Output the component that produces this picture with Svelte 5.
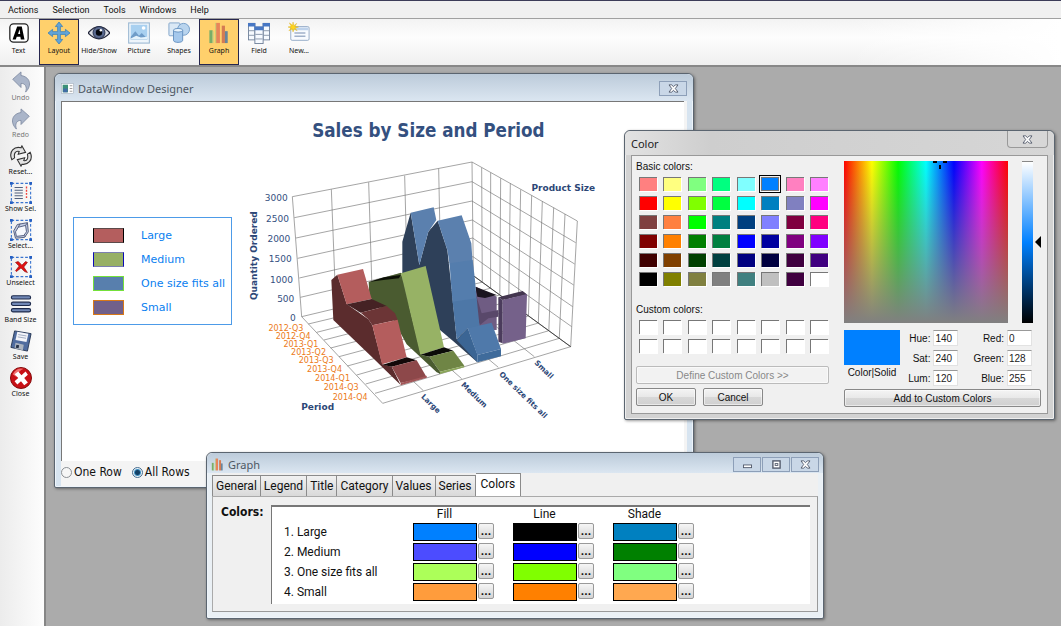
<script>
  const menus = ['Actions', 'Selection', 'Tools', 'Windows', 'Help'];
  const tools = [
    { id: 'text', label: 'Text' },
    { id: 'layout', label: 'Layout', on: true },
    { id: 'eye', label: 'Hide/Show' },
    { id: 'picture', label: 'Picture' },
    { id: 'shapes', label: 'Shapes' },
    { id: 'graph', label: 'Graph', on: true },
    { id: 'field', label: 'Field' },
    { id: 'new', label: 'New...' }
  ];
  const side = [
    { id: 'undo', label: 'Undo', off: true },
    { id: 'redo', label: 'Redo', off: true },
    { id: 'reset', label: 'Reset...' },
    { id: 'showsel', label: 'Show Sel.' },
    { id: 'select', label: 'Select...' },
    { id: 'unselect', label: 'Unselect' },
    { id: 'band', label: 'Band Size' },
    { id: 'save', label: 'Save' },
    { id: 'close', label: 'Close' }
  ];
  const legend = [
    { name: 'Large', fill: '#b45e5e', side: '#000000', edge: '#5c4a4a' },
    { name: 'Medium', fill: '#97b065', side: '#0a0ab8', edge: '#7c80b0' },
    { name: 'One size fits all', fill: '#587fad', side: '#74e03a', edge: '#74e03a' },
    { name: 'Small', fill: '#71608a', side: '#d87818', edge: '#d87818' }
  ];
  const basic = [
    '#ff8080', '#ffff80', '#80ff80', '#00ff80', '#80ffff', '#0080ff', '#ff80c0', '#ff80ff',
    '#ff0000', '#ffff00', '#80ff00', '#00ff40', '#00ffff', '#0080c0', '#8080c0', '#ff00ff',
    '#804040', '#ff8040', '#00ff00', '#008080', '#004080', '#8080ff', '#800040', '#ff0080',
    '#800000', '#ff8000', '#008000', '#008040', '#0000ff', '#0000a0', '#800080', '#8000ff',
    '#400000', '#804000', '#004000', '#004040', '#000080', '#000040', '#400040', '#400080',
    '#000000', '#808000', '#808040', '#808080', '#408080', '#c0c0c0', '#400040', '#ffffff'
  ];
  const custom = Array(16).fill('#ffffff');
  const tabs = ['General', 'Legend', 'Title', 'Category', 'Values', 'Series', 'Colors'];
  const series = [
    { name: '1. Large', colors: ['#0080ff', '#000000', '#0080c0'] },
    { name: '2. Medium', colors: ['#4c4cff', '#0000ff', '#008000'] },
    { name: '3. One size fits all', colors: ['#acff59', '#80ff00', '#80ff80'] },
    { name: '4. Small', colors: ['#ff9c3c', '#ff8000', '#ffa850'] }
  ];
  const kinds = ['Fill', 'Line', 'Shade'];
  const values = [
    { label: 'Hue:', value: 140 }, { label: 'Red:', value: 0 },
    { label: 'Sat:', value: 240 }, { label: 'Green:', value: 128 },
    { label: 'Lum:', value: 120 }, { label: 'Blue:', value: 255 }
  ];

  // Chart frame: seven levels across two walls, and a floor of ten periods.
  const levels = [
    [157, 290, 696, 186, 1012, 363], [163, 353, 696, 245, 1007, 428],
    [168, 414, 696, 303, 1004, 492], [173, 475, 697, 360, 1001, 555],
    [178, 534, 698, 414, 998, 620], [181, 592, 699, 470, 995, 680],
    [185, 650, 700, 527, 992, 740]
  ];
  const leftPosts = [[157, 290, 185, 650], [274, 268, 288, 627], [386, 247, 397, 601], [494, 227, 503, 575], [596, 206, 603, 550], [696, 186, 700, 527]];
  const rightTops = [[725, 203], [752, 218], [782, 235], [811, 250], [842, 269], [875, 286], [907, 304], [941, 323], [975, 342], [1012, 363]];
  const rightPosts = rightTops.map(([x, y]) => {
    const t = (x - 696) / 316;
    return [x, y, 700 + 292 * t, 527 + 213 * t];
  });
  const ticks = [[205, 672], [230, 697], [252, 720], [272, 744], [297, 770], [322, 798], [350, 825], [377, 852], [405, 880], [428, 910]];
  const fronts = [[550, 872], [665, 836], [775, 802], [883, 770]];
  const amounts = [['3000', 143, 302], ['2500', 147, 365], ['2000', 151, 426], ['1500', 155, 487], ['1000', 159, 548], ['500', 163, 605], ['0', 167, 663]];
  const periods = [['2012-Q3', 190, 693], ['2012-Q4', 212, 717], ['2013-Q1', 235, 741], ['2013-Q2', 258, 765], ['2013-Q3', 281, 790], ['2013-Q4', 306, 816], ['2014-Q1', 330, 843], ['2014-Q3', 356, 870], ['2014-Q4', 383, 899]];
  const sizes = [['Large', 542, 892, 44], ['Medium', 662, 856, 44], ['One size fits all', 776, 824, 44], ['Small', 882, 790, 44]];
  const faces = [
    ['#6f5c83', '708,560 770,590 770,690 708,690'],
    ['#59486a', '705,575 725,640 775,630 775,650 745,655 720,675 705,640'],
    ['#1b1520', '706,560 770,585 735,594 712,590'],
    ['#4b3c5c', '775,592 788,600 788,730 775,725'],
    ['#43364f', '775,592 848,573 862,584 788,600'],
    ['#75618a', '788,600 861,582 857,715 788,731'],
    ['#2e4059', '487,425 512,338 538,495 565,395 593,362 622,450 632,540 650,718 683,685 712,787 640,724 600,690 487,600'],
    ['#5b80ae', '512,338 581,322 589,360 565,395 538,495'],
    ['#5b80ae', '593,362 665,346 694,430 698,490 630,500 622,450'],
    ['#547dad', '629,490 698,480 705,540 710,600 638,610 632,540'],
    ['#4d77a7', '638,605 710,595 718,672 720,690 683,685 650,718'],
    ['#3b6594', '683,685 712,763 712,787 650,720'],
    ['#4f79aa', '683,685 755,668 783,747 712,765'],
    ['#3f6b9b', '712,765 783,747 783,769 712,787'],
    ['#4a5b30', '386,546 483,518 543,763 602,822 590,817 500,733 460,660 388,590'],
    ['#0c1006', '386,546 432,532 482,525 477,535 430,540'],
    ['#97b265', '483,520 557,498 612,742 541,764'],
    ['#0b0c08', '541,764 612,742 640,752 568,770'],
    ['#6f8545', '568,770 640,752 673,797 600,815'],
    ['#8ba65a', '600,815 673,797 673,802 600,822'],
    ['#4a5b30', '541,764 568,770 600,815 600,822'],
    ['#5b2c2d', '274,540 292,524 320,612 385,658 397,676 427,793 455,800 482,855 438,812 395,770 280,660'],
    ['#b45d5d', '292,524 369,507 395,597 320,613'],
    ['#452224', '320,613 395,597 440,618 362,638'],
    ['#6c3536', '362,638 440,618 465,640 473,659 397,676 385,658'],
    ['#b45d5d', '397,676 473,659 500,772 426,793'],
    ['#130808', '428,794 500,772 530,781 455,800'],
    ['#8d484a', '455,800 530,781 560,832 482,849'],
    ['#a35658', '482,849 560,827 560,833 482,856']
  ];
</script>

{#snippet icon(id)}
  <svg class="icon" viewBox="0 0 24 24" aria-hidden="true">
    {#if id === 'text'}
      <rect x="2" y="2" width="20" height="20" rx="4" fill="#fff" stroke="#222" stroke-width="1.4" />
      <path d="M5 19 10 5h5l3 14h-4l-.5-3h-4L8.500 19z" fill="#000" /><path d="m11 13 1.600-5 .7 5z" fill="#fff" />
    {:else if id === 'layout'}
      <path d="m12 0 4 5h-2.500v5.500H19V8l5 4-5 4v-2.500h-5.500V19H16l-4 5-4-5h2.500v-5.500H5V16l-5-4 5-4v2.500h5.500V5H8z" fill="#62a4d8" stroke="#347bb5" stroke-width=".8" />
    {:else if id === 'eye'}
      <path d="M0 12Q12-2 24 12 12 25 0 12z" fill="#d9dce3" stroke="#23263a" stroke-width="1.300" />
      <circle cx="12" cy="11.500" r="6.500" fill="#59698f" stroke="#1f2945" /><circle cx="12" cy="11.500" r="3.500" fill="#050810" /><circle cx="14" cy="9" r="1.300" fill="#fff" />
    {:else if id === 'picture'}
      <rect x=".7" y="1" width="22.600" height="22" fill="#eef5fb" stroke="#9db9d4" stroke-width="1.200" /><rect x="3" y="3" width="18" height="16" fill="#a8d0f0" />
      <path d="m3 16 5-6 4 5 3-3 6 6v1H3z" fill="#6f9cc8" /><path d="m3 18 6-3 5 2 7-1v3H3z" fill="#e5f3fc" /><circle cx="17" cy="6.500" r="2" fill="#fff" />
    {:else if id === 'shapes'}
      <rect x="1" y="1" width="12" height="14" rx="1" fill="#dae8f5" stroke="#7fa3c8" /><circle cx="17" cy="8" r="6.500" fill="#b9d4ee" stroke="#6f99c6" />
      <path d="M6 9v11c0 3 10 3 10 0V9z" fill="#a5c8ec" stroke="#648fbe" /><ellipse cx="11" cy="9" rx="5" ry="2" fill="#e8f3fc" stroke="#648fbe" />
    {:else if id === 'graph'}
      <rect x="1.500" y="9" width="3.500" height="14" fill="#79ad68" /><rect x="5" y="10" width="1" height="13" fill="#b5cf8a" /><rect x="8" y="1" width="1.500" height="22" fill="#b9c878" /><rect x="9" y="1" width="4" height="22" fill="#e8835a" /><rect x="15" y="4" width="3.500" height="19" fill="#d47b53" /><rect x="18.500" y="10" width="3" height="13" fill="#67859c" />
    {:else if id === 'field'}
      <g fill="#f6faff" stroke="#71829b"><rect x="0.500" y="1.500" width="7" height="18" /><rect x="16.500" y="1.500" width="7" height="18" /><rect x="7.500" y="5.500" width="9" height="18" /></g>
      <path d="M0 1h8v4H0zm16 0h8v4h-8zM7 5h10v4H7z" fill="#4777c4" /><path d="M1 9.500h6m-6 5h6M8 13.500h8m-8 5h8m1-9h6m-6 5h6" stroke="#8494a9" />
    {:else if id === 'new'}
      <rect x="3" y="5" width="20" height="15" rx="1.500" fill="#f8fbff" stroke="#92a8c5" /><path d="M4 6h18v3H4z" fill="#bed2eb" /><path d="M7 12h12M7 15.500h12" stroke="#a0b1ca" stroke-width="1.500" />
      <path d="m5.500 0 .8 4 3.200-2.500-2 3.500 4 .5-4 1 2.500 3-3.500-2-1 3.500-.8-3.500L1 9.500l2.500-3L0 5.500l3.500-.8L1.500 1 5 3.500z" fill="#ffd51c" stroke="#d9a500" stroke-width=".4" />
    {:else if id === 'undo' || id === 'redo'}
      <g transform={id === 'redo' ? 'translate(24 0) scale(-1 1)' : ''}>
        <path d="M3 9 12 1v4c9 1 13 10 5 18 2-6-.5-9.500-5-9.500V18z" fill="#aab5c9" stroke="#7d89a0" stroke-width=".9" />
      </g>
    {:else if id === 'reset'}
      <g fill="#e3e3e3" stroke="#333" stroke-width="1.200">
        <path d="M2 16C-2 7 5 1 12 3l1-2 4 7-8 2 1-3C6 6 4 9 5 14z" /><path d="M22 8c4 9-3 14-9 13l-1 2-4-7 8-2-1 3c4 1 5-3 4-7z" />
      </g>
    {:else if id === 'showsel' || id === 'select' || id === 'unselect'}
      <rect x="1.500" y="1.500" width="21" height="21" fill="none" stroke="#3974cf" stroke-dasharray="3 2" stroke-width="1.200" /><path d="M0 0h3v3H0zm21 0h3v3h-3zM0 21h3v3H0zm21 0h3v3h-3z" fill="#255fc2" />
      {#if id === 'showsel'}
        <path d="M5 6h9M5 9h9M5 12h9M5 15h9M5 18h9" stroke="#52617e" stroke-width="1.200" /><path d="M18 5v14" stroke="#f0433a" stroke-width="1.500" stroke-dasharray="2 1.500" />
      {:else if id === 'select'}
        <g fill="#c6cfe4" stroke="#4c5779"><path d="M8 6 19 4l1 10-4 6-10 1-2-8z" /><path d="m9 9 8-2 1 7-3 4-8 1-1-5z" fill="#f6f8fd" /><path d="m9 9 2-4M17 7l2-3M15 18l2 1" fill="none" /></g>
      {:else}
        <path d="m6 7 3-1 4 4 4-4 2 1-4 5 4 6-3-1-4-4-5 4-1-1 4-5z" fill="#e31010" stroke="#8f0808" stroke-width=".7" />
      {/if}
    {:else if id === 'band'}
      <g fill="#7087b5" stroke="#1e2b4c" stroke-width="1.200"><rect x="1.500" y="3" width="21" height="3.600" rx="1.800" /><rect x="1.500" y="10" width="21" height="3.600" rx="1.800" /><rect x="1.500" y="17" width="21" height="3.600" rx="1.800" /></g>
    {:else if id === 'save'}
      <path d="m5 1 18 3-4 19-18-4z" fill="#506c9f" stroke="#243452" /><path d="m8 2 12 2-2 9-12-2z" fill="#f4f5fa" /><path d="m6 14 9 2-1 6-9-2z" fill="#acb4c0" /><path d="m7 16 3 .5-.7 3.500-3-.6z" fill="#263248" /><path d="m9 5 9 1.500M8.500 7.500l9 1.500" stroke="#9aa6bd" />
    {:else if id === 'close'}
      <circle cx="12" cy="12" r="11.500" fill="#c81016" stroke="#7e0606" /><path d="M3 8Q7 0 15 2q-6 2-8 9z" fill="#ef6d6d" />
      <path d="m5 8 4-3 3.500 4L17 5l2.500 3.500-4 3.500 4 5-4 3-3.500-4.500L8 19l-3-3.500 4-3.500z" fill="#fff" />
    {:else if id === 'window'}
      <rect x="1" y="3" width="22" height="18" fill="#fff" stroke="#a2adba" /><path d="M3 5h10v14H3z" fill="#3b9078" /><path d="M4 12h8v7H4z" fill="#426ca6" /><path d="M16 7h5m-5 5h5m-5 5h5" stroke="#a0a0a0" stroke-width="2" />
    {/if}
  </svg>
{/snippet}

{#snippet cross()}
  <svg class="cross" viewBox="0 0 12 10" aria-hidden="true"><path d="M1 1h3l2 2 2-2h3L8 5l3 4H8L6 7 4 9H1l3-4z" fill="#fff" stroke="#50586a" /></svg>
{/snippet}

<div class="app">
  <nav class="menu" aria-label="Main">
    {#each menus as m}<button>{m}</button>{/each}
  </nav>
  <div class="toolbar" role="toolbar" aria-label="Tools">
    {#each tools as t}
      <button class="tool" class:on={t.on} aria-pressed={!!t.on}>{@render icon(t.id)}<span>{t.label}</span></button>
    {/each}
  </div>
  <div class="main">
    <aside class="sidebar">
      {#each side as s}
        <button class="tool" class:off={s.off}>{@render icon(s.id)}<span>{s.label}</span></button>
      {/each}
    </aside>
    <main class="desktop">
      <section class="win designer" aria-label="DataWindow Designer">
        <header class="titlebar">{@render icon('window')}<h2>DataWindow Designer</h2><button class="ctl" aria-label="Close">{@render cross()}</button></header>
        <div class="canvas">
          <ul class="legend">
            {#each legend as l}
              <li><i style="background:{l.fill};border-color:{l.edge} {l.side}"></i>{l.name}</li>
            {/each}
          </ul>
          <svg class="chart" viewBox="0 6 1080 1005" role="img" aria-label="Sales by Size and Period">
            <g class="grid">
              {#each levels as [a, b, c, d, e, f]}<polyline points="{a},{b} {c},{d} {e},{f}" />{/each}
              {#each [...leftPosts, ...rightPosts] as [a, b, c, d]}<line x1={a} y1={b} x2={c} y2={d} />{/each}
              {#each ticks as [x, y], i}<line x1={x} y1={y} x2={rightPosts[i][2]} y2={rightPosts[i][3]} />{/each}
              {#each fronts as [x, y], i}<line x1={x} y1={y} x2={leftPosts[i + 1][2]} y2={leftPosts[i + 1][3]} />{/each}
              <line x1="185" y1="650" x2="428" y2="910" />
            </g>
            <line x1="700" y1="527" x2="992" y2="740" stroke="#444" stroke-width="3" />
            {#each faces as [fill, points]}<polygon {fill} {points} />{/each}
            <text class="title" x="565" y="111" text-anchor="middle">Sales by Size and Period</text>
            <text class="axis" x="970" y="273" text-anchor="middle">Product Size</text>
            <text class="axis" x="233" y="929" text-anchor="middle">Period</text>
            <text class="axis" transform="translate(52 467) rotate(-90)" text-anchor="middle">Quantity Ordered</text>
            {#each amounts as [t, x, y]}<text class="amount" {x} {y} text-anchor="end">{t}</text>{/each}
            {#each periods as [t, x, y]}<text class="period" {x} {y} text-anchor="end">{t}</text>{/each}
            {#each sizes as [t, x, y, r]}<text class="size" transform="translate({x} {y}) rotate({r})">{t}</text>{/each}
          </svg>
        </div>
        <div class="rows">
          <label><input type="radio" name="rows" />One Row</label>
          <label><input type="radio" name="rows" checked />All Rows</label>
        </div>
      </section>

      <section class="win graph" aria-label="Graph">
        <header class="titlebar">
          {@render icon('graph')}<h2>Graph</h2>
          <button class="ctl" aria-label="Minimize"><svg class="cross" viewBox="0 0 12 10"><rect x="1.500" y="5.500" width="9" height="3" fill="#fff" stroke="#50586a" /></svg></button>
          <button class="ctl" aria-label="Maximize"><svg class="cross" viewBox="0 0 12 10"><rect x="2" y="1" width="8" height="8" fill="#fff" stroke="#50586a" stroke-width="1.500" /><rect x="4.500" y="4" width="3" height="2" fill="none" stroke="#50586a" /></svg></button>
          <button class="ctl" aria-label="Close">{@render cross()}</button>
        </header>
        <div class="sheet">
          <div class="tabs" role="tablist">
            {#each tabs as t}<button role="tab" aria-selected={t === 'Colors'} class:active={t === 'Colors'}>{t}</button>{/each}
          </div>
          <div class="panel">
            <h3>Colors:</h3>
            <div class="list">
              <table>
                <thead><tr><td></td>{#each kinds as k}<th scope="col">{k}</th>{/each}</tr></thead>
                <tbody>
                  {#each series as s}
                    <tr>
                      <th scope="row">{s.name}</th>
                      {#each s.colors as c, i}
                        <td><div class="pick"><span class="sample" style="background:{c}"></span><button aria-label="{kinds[i]} for {s.name}">...</button></div></td>
                      {/each}
                    </tr>
                  {/each}
                </tbody>
              </table>
            </div>
          </div>
        </div>
      </section>

      <section class="win color" aria-label="Color">
        <header class="titlebar"><h2>Color</h2><button class="ctl" aria-label="Close">{@render cross()}</button></header>
        <div class="dialog">
          <div class="left">
            <h3>Basic colors:</h3>
            <div class="swatches">
              {#each basic as c, i}<button class:chosen={i === 5} aria-label={c} style="background:{c}"></button>{/each}
            </div>
            <h3 class="second">Custom colors:</h3>
            <div class="swatches">
              {#each custom as c, i}<button aria-label="Custom {i + 1}" style="background:{c}"></button>{/each}
            </div>
            <button class="push define" disabled>Define Custom Colors &gt;&gt;</button>
            <div class="actions"><button class="push">OK</button><button class="push">Cancel</button></div>
          </div>
          <div class="right">
            <div class="mix">
              <div class="field">
                <svg class="aim" viewBox="0 0 14 8" aria-hidden="true"><path d="M0 1h4M10 1h4M7 4v4" stroke="#000" stroke-width="2" /></svg>
              </div>
              <div class="lum"><svg class="arrow" viewBox="0 0 6 12" aria-hidden="true"><path d="M6 0v12L0 6z" /></svg></div>
            </div>
            <div class="details">
              <div class="preview"><span class="now"></span><span>Color|Solid</span></div>
              <div class="numbers">
                {#each values as v}<label for={v.label}>{v.label}</label><input id={v.label} value={v.value} />{/each}
              </div>
            </div>
            <button class="push">Add to Custom Colors</button>
          </div>
        </div>
      </section>
    </main>
  </div>
</div>

<style>
  :global(body) { margin: 0; }
  * { box-sizing: border-box; }
  button { font: inherit; color: inherit; padding: 0; margin: 0; border: 0; background: none; }
  h2, h3 { margin: 0; font-weight: 400; }
  .app { min-height: 100vh; display: flex; flex-direction: column; font-family: Roboto, sans-serif; color: #111; background: #ababab; }
  .menu { display: flex; gap: 14px; height: 18px; padding: 0 8px; align-items: center; background: #f0f0f0; border-top: 1px solid #3c3c58; font: 9px Roboto, sans-serif; }
  .toolbar { display: flex; height: 49px; border-top: 1px solid #a0a0a0; border-bottom: 2px solid #888; background: linear-gradient(90deg, #fff0 80%, #fff 100%), linear-gradient(#f3f3f3, #fdfdfd 40%, #efefef); }
  .tool { display: flex; flex-direction: column; align-items: center; font: 7px "Noto Sans", sans-serif; line-height: 10px; white-space: nowrap; }
  .toolbar .tool { width: 40px; padding-top: 2px; gap: 2px; border: 1px solid transparent; border-bottom-width: 0; }
  .toolbar .tool:first-child { width: 39px; padding-right: 2px; }
  .toolbar .on { background: #ffd06c; border: 1px solid #26264e; }
  .icon { width: 22px; height: 22px; display: block; flex: none; }
  .main { flex: 1; display: flex; }
  .sidebar { width: 46px; padding: 4px 3px 0 0; display: flex; flex-direction: column; gap: 5px; background: linear-gradient(90deg, #ececec, #fdfdfd); border-right: 2px solid #868686; }
  .off span { color: #777; }
  .desktop { flex: 1; position: relative; overflow: hidden; min-height: 558px; background: #ababab; }

  .win { position: absolute; border: 1px solid #5b6570; border-radius: 6px 6px 2px 2px; padding: 0 6px 6px; background: #d7e4f0; box-shadow: inset 0 0 0 1px #eef4fa, 1px 1px 3px #0006; }
  .titlebar { display: flex; align-items: center; height: 27px; gap: 4px; margin: 0 -6px; padding: 3px 6px 0; border-radius: 6px 6px 0 0; background: linear-gradient(#bccbda, #dbe6f1); }
  .titlebar h2 { flex: 1; font: 11px "Noto Sans", sans-serif; color: #4d5763; }
  .titlebar .icon { width: 13px; height: 13px; }
  .ctl { width: 28px; height: 15px; display: grid; place-items: center; border: 1px solid #8d9fb8; background: #c9d7e7; }
  .ctl + .ctl { margin-left: -3px; }
  .cross { width: 11px; height: 9px; }

  .designer { left: 8px; top: 6px; width: 640px; background: linear-gradient(90deg, #d7e4f0 6px, #f4f4f4 6px, #f4f4f4 calc(100% - 6px), #d7e4f0 calc(100% - 6px)); }
  .designer .titlebar { padding-top: 2px; }
  .canvas { display: flex; align-items: flex-start; gap: 8px; height: 360px; margin-right: 3px; background: #fff; border: 1px solid #777; border-width: 1px 0 0 1px; padding-left: 11px; }
  .legend { list-style: none; width: 159px; margin: 115px 0 0; padding: 5px 0 5px 19px; border: 1px solid #4d9be8; font: 11px "DejaVu Sans", sans-serif; color: #0a80f0; display: flex; flex-direction: column; }
  .legend li { display: flex; align-items: center; gap: 17px; height: 24px; white-space: nowrap; }
  .legend i { width: 31px; height: 15px; border: 1px solid; }
  .chart { width: 360px; flex: none; display: block; }
  .grid { fill: none; stroke: #777; stroke-width: 2; }
  .title { font: bold 56px "DejaVu Sans Condensed", "DejaVu Sans", sans-serif; fill: #34507f; }
  .axis { font: bold 27px "DejaVu Sans", sans-serif; fill: #2d4777; }
  .amount { font: 27px "DejaVu Sans", sans-serif; fill: #34507f; }
  .period { font: 24px "DejaVu Sans", sans-serif; fill: #ec7a18; }
  .size { font: bold 22px "DejaVu Sans", sans-serif; fill: #2d4777; }
  .rows { display: flex; gap: 10px; padding: 3px 0 1px; font: 12px "DejaVu Sans Condensed", "DejaVu Sans", sans-serif; line-height: 16px; }
  .rows label { display: flex; align-items: center; gap: 2px; }
  .rows input { appearance: none; width: 11px; height: 11px; margin: 0; border: 1px solid #8a8f94; border-radius: 50%; background: #f6f6f6; }
  .rows input:checked { border-color: #476d8f; background: radial-gradient(circle, #123f64 0 2px, #3d8fc2 3px, #e8f2f8 4px); }

  .graph { left: 160px; top: 385px; width: 618px; background: #eaf0f5; padding: 0 5px 6px; }
  .graph .titlebar { height: 20px; margin: 0 -5px; padding: 2px 4px 0; }
  .sheet { background: #f0f0f0; }
  .tabs { display: flex; align-items: flex-end; height: 23px; font-size: 12px; }
  .tabs button { height: 21px; padding: 0 3px; border: 1px solid #8b8b8b; border-width: 1px 1px 0 0; background: linear-gradient(#f1f1f1, #d9d9d9); }
  .tabs button:first-child { border-left-width: 1px; }
  .tabs .active { height: 23px; padding: 0 5px 2px; background: #fff; }
  .panel { display: flex; gap: 6px; padding: 8px 7px 7px 8px; border: 1px solid #aaa; border-right-color: #999; border-bottom-color: #999; }
  .panel h3 { font: bold 12px "DejaVu Sans Condensed", "DejaVu Sans", sans-serif; line-height: 14px; width: 44px; }
  .list { flex: 1; background: #fff; border: 2px solid #777; border-width: 2px 0 0 1px; padding: 0 0 2px 12px; }
  table { border-collapse: collapse; font-size: 12px; }
  td, th { padding: 0; height: 20px; font-weight: 400; width: 100px; }
  thead th, thead td { height: 15px; line-height: 15px; }
  thead th { padding-right: 37px; }
  tr > :first-child { width: 129px; text-align: left; }
  .pick { display: flex; gap: 1px; }
  .sample { width: 64px; height: 18px; border: 1px solid #000; }
  .pick button { width: 16px; height: 16px; line-height: 14px; border: 1px solid #999; border-radius: 2px; background: linear-gradient(#f6f6f6, #d4d4d4); font-weight: 700; }

  .color { left: 578px; top: 63px; width: 431px; background: #d2d2d2; box-shadow: inset 0 0 0 1px #eee, 1px 1px 3px #0006; padding: 0 6px 5px; font: 10px "Liberation Sans", sans-serif; }
  .color .titlebar { height: 24px; background: linear-gradient(90deg, #e2e2e2, #cecece 20%, #d6d6d6); padding-top: 0; }
  .color h2 { color: #222; font: 11px "Noto Sans", sans-serif; }
  .color .ctl { width: 41px; height: 17px; align-self: flex-start; background: #d7d7d7; border-color: #999; border-top: 0; border-radius: 0 0 4px 4px; }
  .dialog { display: flex; gap: 15px; padding: 5px 6px 6px 4px; background: #f0f0f0; border: 1px solid #999; }
  .left { width: 193px; display: flex; flex-direction: column; }
  .left h3 { font-size: 10px; line-height: 12px; margin-bottom: 4px; }
  .left .second { margin: 18px 0 4px; }
  .swatches { display: grid; grid-template-columns: repeat(8, 18px); justify-content: space-between; gap: 5px; padding: 0 1px 0 3px; }
  .swatches button { height: 14px; border: 1px solid #777; border-width: 1px 0 0 1px; box-shadow: 1px 1px 0 #fff; }
  .swatches .chosen { outline: 1px solid #000; border-width: 1px; outline-offset: 1px; }
  .push { height: 18px; border: 1px solid #888; border-radius: 2px; background: linear-gradient(#f4f4f4, #e8e8e8 50%, #d8d8d8 50%, #d0d0d0); box-shadow: inset 0 0 0 1px #fff8; }
  .define { margin-top: 13px; color: #888; background: #f2f2f2; border-color: #bbb; }
  .actions { display: flex; gap: 7px; margin-top: 4px; }
  .actions .push { width: 60px; }
  .right { flex: 1; display: flex; flex-direction: column; }
  .mix { display: flex; gap: 14px; height: 162px; }
  .field { position: relative; width: 164px; background: linear-gradient(#80808000, #808080), linear-gradient(90deg, red, #ff0 17%, #0f0 33%, #0ff 50%, #00f 67%, #f0f 84%, red); }
  .aim { position: absolute; top: 0; left: 89px; width: 14px; height: 8px; }
  .lum { position: relative; width: 11px; background: linear-gradient(#fff, #0080ff 50%, #000); border-top: 1px solid #888; }
  .arrow { position: absolute; left: 13px; top: 74px; width: 6px; height: 12px; }
  .details { display: flex; justify-content: space-between; margin: 7px 0 3px; padding-right: 9px; }
  .preview { width: 56px; display: flex; flex-direction: column; align-items: center; gap: 2px; }
  .now { align-self: stretch; height: 35px; background: #0080ff; }
  .numbers { display: grid; grid-template-columns: auto 25px auto 25px; gap: 4px 3px; align-items: center; text-align: right; }
  .numbers label:nth-of-type(even) { padding-left: 12px; }
  .numbers input { width: 25px; height: 16px; padding: 0 1px; border: 1px solid #e2e2e2; border-top-color: #999; background: #fff; font: inherit; color: #222; }
</style>
